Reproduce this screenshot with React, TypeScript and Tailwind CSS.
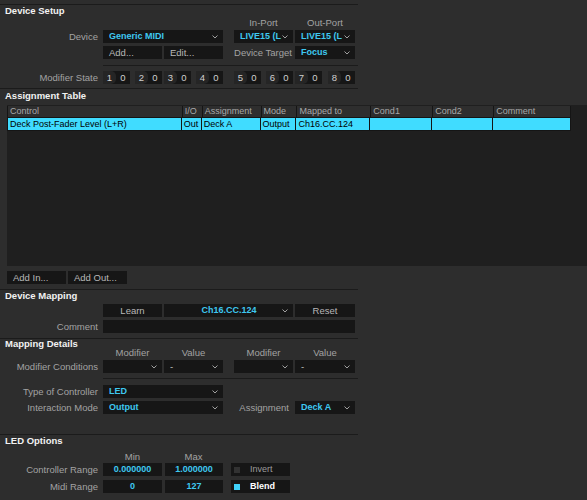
import React from "react";

function Chevron() {
  return (
    <svg width="6" height="4" viewBox="0 0 6 4" className="shrink-0">
      <polyline points="0.5,0.5 3,3 5.5,0.5" fill="none" stroke="#a0a0a0" strokeWidth="1" />
    </svg>
  );
}

function Drop({ w, text, cyan = true, center = false }: { w: string; text?: string; cyan?: boolean; center?: boolean }) {
  return (
    <div className={`${w} h-full bg-[#161616] flex items-center pl-[6px] pr-[5px]`}>
      <span className={`flex-1 truncate ${center ? "text-center pl-[6px]" : ""} ${cyan ? "text-[#3ec8f1] font-bold text-[9px]" : "text-[#c0c0c0]"}`}>{text}</span>
      <Chevron />
    </div>
  );
}

function Btn({ w, text, center = false }: { w: string; text: string; center?: boolean }) {
  return (
    <div className={`${w} h-full bg-[#161616] flex items-center ${center ? "justify-center" : "pl-[6px]"} text-[#b8b8b8]`}>{text}</div>
  );
}

function Label({ text }: { text: string }) {
  return <div className="w-[98px] text-right text-[#a3a3a3] shrink-0 whitespace-nowrap">{text}</div>;
}

function Header({ text, h }: { text: string; h: string }) {
  return <div className={`${h} flex items-center pl-[5px] font-bold text-[#f2f2f2] text-[9.5px]`}>{text}</div>;
}

function Sep({ indent = false }: { indent?: boolean }) {
  return <div className={`h-px bg-[#1b1b1b] ${indent ? "ml-[103px] w-[255px]" : "w-[358px]"}`} />;
}

function Pair({ n }: { n: string }) {
  return (
    <div className="w-[27px] h-full bg-[#161616] flex">
      <div className="w-[13px] h-full bg-[#252525] rounded-r-[5px] flex items-center justify-center text-[#d0d0d0]">{n}</div>
      <div className="flex-1 flex items-center justify-center text-[#d0d0d0]">0</div>
    </div>
  );
}

function Check({ on, text }: { on: boolean; text: string }) {
  return (
    <div className="w-[59px] h-full bg-[#161616] flex items-center pl-[3px]">
      <div className={`w-[6px] h-[6px] ${on ? "bg-[#40d2fb]" : "bg-[#323232]"}`} />
      <span className={`ml-[10px] ${on ? "text-white font-bold" : "text-[#9c9c9c]"}`}>{text}</span>
    </div>
  );
}

const cols = [
  { name: "Control", w: "w-[175px]", v: "Deck Post-Fader Level (L+R)" },
  { name: "I/O", w: "w-[20px]", v: "Out" },
  { name: "Assignment", w: "w-[59px]", v: "Deck A" },
  { name: "Mode", w: "w-[36px]", v: "Output" },
  { name: "Mapped to", w: "w-[74px]", v: "Ch16.CC.124" },
  { name: "Cond1", w: "w-[62px]", v: "" },
  { name: "Cond2", w: "w-[61px]", v: "" },
  { name: "Comment", w: "w-[77px]", v: "" },
];

export default function App() {
  return (
    <div className="w-[587px] h-[500px] bg-[#2d2d2d] overflow-hidden text-[9.5px] leading-none font-['Liberation_Sans',Arial,sans-serif]">
      <div className="h-[4px]" />
      <Sep />
      <Header text="Device Setup" h="h-[12px]" />
      <div className="h-[12px] flex items-center text-[#a3a3a3]">
        <div className="ml-[234px] w-[59px] text-center">In-Port</div>
        <div className="ml-[2px] w-[60px] text-center">Out-Port</div>
      </div>
      <div className="h-[1px]" />
      <div className="flex h-[13px] items-center">
        <Label text="Device" />
        <div className="ml-[5px] flex h-full">
          <Drop w="w-[120px]" text="Generic MIDI" />
          <div className="w-[11px]" />
          <Drop w="w-[59px]" text="LIVE15 (L" />
          <div className="w-[2px]" />
          <Drop w="w-[60px]" text="LIVE15 (L" />
        </div>
      </div>
      <div className="h-[3px]" />
      <div className="flex h-[13px] items-center">
        <div className="w-[103px]" />
        <div className="flex h-full items-center">
          <Btn w="w-[59px]" text="Add..." />
          <div className="w-[2px]" />
          <Btn w="w-[59px]" text="Edit..." />
          <div className="w-[11px]" />
          <div className="w-[59px] text-right pr-[1px] text-[#a3a3a3] whitespace-nowrap">Device Target</div>
          <div className="w-[2px]" />
          <Drop w="w-[60px]" text="Focus" />
        </div>
      </div>
      <div className="h-[6px]" />
      <Sep indent />
      <div className="h-[5px]" />
      <div className="flex h-[13px] items-center">
        <Label text="Modifier State" />
        <div className="ml-[5px] flex h-full">
          <div className="w-[59px] flex justify-between"><Pair n="1" /><Pair n="2" /></div>
          <div className="w-[2px]" />
          <div className="w-[59px] flex justify-between"><Pair n="3" /><Pair n="4" /></div>
          <div className="w-[11px]" />
          <div className="w-[59px] flex justify-between"><Pair n="5" /><Pair n="6" /></div>
          <div className="w-[2px]" />
          <div className="w-[60px] flex justify-between"><Pair n="7" /><Pair n="8" /></div>
        </div>
      </div>
      <div className="h-[4px]" />
      <Sep />
      <Header text="Assignment Table" h="h-[14px]" />
      <div className="h-[2px]" />
      <div className="ml-[7px] w-[580px] h-[161px] bg-[#1f1f1f] pt-[1px] text-[9px]">
        <div className="flex h-[11px] w-[564px] bg-[#2e2e2e] border-l border-[#151515]">
          {cols.map((c) => (
            <div key={c.name} className={`${c.w} h-full border-r border-[#151515] flex items-center pl-[2px] text-[#a8a8a8] whitespace-nowrap overflow-hidden`}>
              {c.name}
            </div>
          ))}
        </div>
        <div className="flex h-[14px] w-[564px] bg-[#40dcff] border border-[#151515]">
          {cols.map((c, i) => (
            <div key={c.name} className={`${i === 0 ? "w-[174px]" : c.w} h-full ${i < cols.length - 1 ? "border-r border-[#151515]" : ""} flex items-center pl-[2px] text-black whitespace-nowrap overflow-hidden`}>
              {c.v}
            </div>
          ))}
        </div>
      </div>
      <div className="h-[5px]" />
      <div className="flex h-[13px]">
        <div className="w-[7px]" />
        <Btn w="w-[59px]" text="Add In..." />
        <div className="w-[2px]" />
        <Btn w="w-[59px]" text="Add Out..." />
      </div>
      <div className="h-[5px]" />
      <Sep />
      <Header text="Device Mapping" h="h-[11px]" />
      <div className="h-[3px]" />
      <div className="flex h-[13px]">
        <div className="w-[103px]" />
        <Btn w="w-[59px]" text="Learn" center />
        <div className="w-[2px]" />
        <Drop w="w-[129px]" text="Ch16.CC.124" center />
        <div className="w-[2px]" />
        <Btn w="w-[60px]" text="Reset" center />
      </div>
      <div className="h-[3px]" />
      <div className="flex h-[13px] items-center">
        <Label text="Comment" />
        <div className="ml-[5px] w-[252px] h-full bg-[#161616]" />
      </div>
      <div className="h-[5px]" />
      <Sep />
      <Header text="Mapping Details" h="h-[10px]" />
      <div className="h-[8px] flex items-center text-[#a3a3a3]">
        <div className="ml-[103px] w-[59px] text-center">Modifier</div>
        <div className="ml-[2px] w-[59px] text-center">Value</div>
        <div className="ml-[11px] w-[59px] text-center">Modifier</div>
        <div className="ml-[2px] w-[60px] text-center">Value</div>
      </div>
      <div className="h-[3px]" />
      <div className="flex h-[13px] items-center">
        <Label text="Modifier Conditions" />
        <div className="ml-[5px] flex h-full">
          <Drop w="w-[59px]" text="" />
          <div className="w-[2px]" />
          <Drop w="w-[59px]" text="-" cyan={false} />
          <div className="w-[11px]" />
          <Drop w="w-[59px]" text="" />
          <div className="w-[2px]" />
          <Drop w="w-[60px]" text="-" cyan={false} />
        </div>
      </div>
      <div className="h-[5px]" />
      <Sep indent />
      <div className="h-[6px]" />
      <div className="flex h-[13px] items-center">
        <Label text="Type of Controller" />
        <div className="ml-[5px] flex h-full">
          <Drop w="w-[120px]" text="LED" />
        </div>
      </div>
      <div className="h-[3px]" />
      <div className="flex h-[13px] items-center">
        <Label text="Interaction Mode" />
        <div className="ml-[5px] flex h-full items-center">
          <Drop w="w-[120px]" text="Output" />
          <div className="w-[11px]" />
          <div className="w-[59px] text-right pr-[4px] text-[#a3a3a3]">Assignment</div>
          <div className="w-[2px]" />
          <Drop w="w-[60px]" text="Deck A" />
        </div>
      </div>
      <div className="h-[20px]" />
      <Sep />
      <Header text="LED Options" h="h-[12px]" />
      <div className="h-[4px]" />
      <div className="h-[11px] flex items-center text-[#a3a3a3]">
        <div className="ml-[103px] w-[59px] text-center">Min</div>
        <div className="ml-[2px] w-[59px] text-center">Max</div>
      </div>
      <div className="h-[1px]" />
      <div className="flex h-[13px] items-center">
        <Label text="Controller Range" />
        <div className="ml-[5px] flex h-full text-[9px]">
          <div className="w-[59px] h-full bg-[#161616] flex items-center justify-center text-[#3ec8f1] font-bold">0.000000</div>
          <div className="w-[3px]" />
          <div className="w-[58px] h-full bg-[#161616] flex items-center justify-center text-[#3ec8f1] font-bold">1.000000</div>
          <div className="w-[8px]" />
          <Check on={false} text="Invert" />
        </div>
      </div>
      <div className="h-[4px]" />
      <div className="flex h-[13px] items-center">
        <Label text="Midi Range" />
        <div className="ml-[5px] flex h-full text-[9px]">
          <div className="w-[59px] h-full bg-[#161616] flex items-center justify-center text-[#3ec8f1] font-bold">0</div>
          <div className="w-[3px]" />
          <div className="w-[58px] h-full bg-[#161616] flex items-center justify-center text-[#3ec8f1] font-bold">127</div>
          <div className="w-[8px]" />
          <Check on text="Blend" />
        </div>
      </div>
    </div>
  );
}
